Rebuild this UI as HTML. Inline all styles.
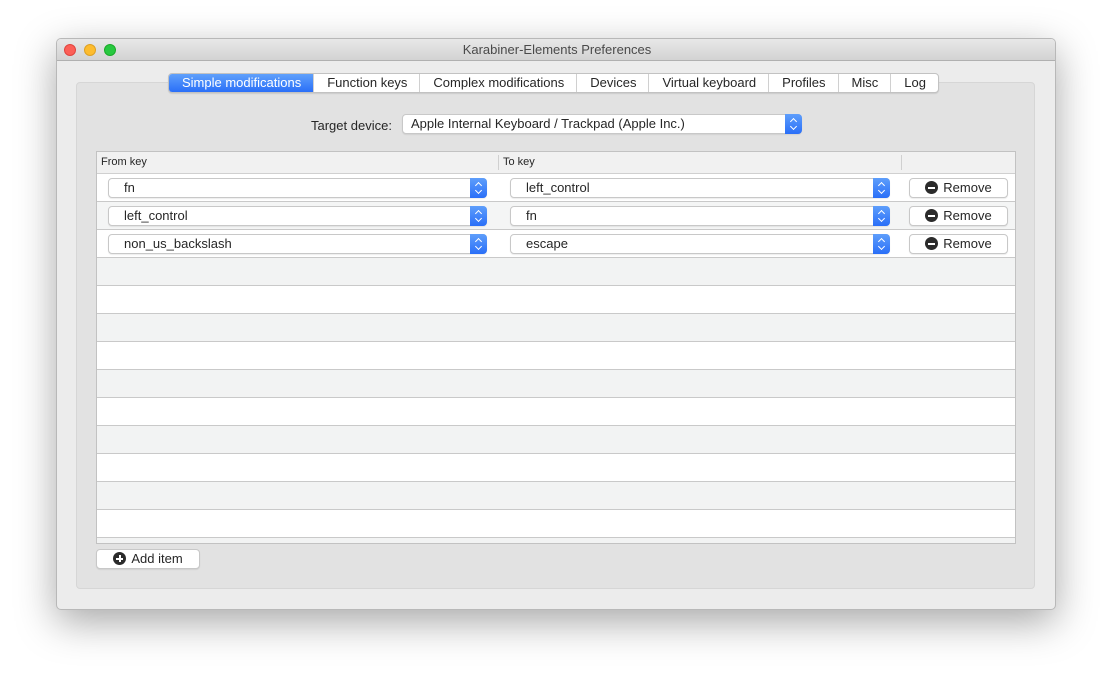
<!DOCTYPE html>
<html><head><style>
*{box-sizing:border-box;margin:0;padding:0}
body{width:1112px;height:684px;background:#fff;font-family:"Liberation Sans",sans-serif;font-size:13px;color:#262626;position:relative;overflow:hidden}
.a{position:absolute}
.win{left:56px;top:38px;width:1000px;height:572px;background:#ececec;border:1px solid #b8b8b8;border-radius:5px;box-shadow:0 12px 40px rgba(0,0,0,.35);overflow:hidden}
.tb{left:0;top:0;width:1000px;height:22px;background:linear-gradient(#e8e8e8,#d3d3d3);border-bottom:1px solid #b0b0b0;text-align:center;line-height:22px;color:#4a4a4a;font-size:13px}
.dot{top:5px;width:12px;height:12px;border-radius:50%}
.grp{left:19px;top:43px;width:959px;height:507px;background:#e2e2e2;border:1px solid #d6d6d6;border-radius:4px}
.tabs{left:111px;top:34px;height:20px;display:flex;background:#fff;border:1px solid #c2c2c2;border-radius:4px;overflow:hidden;box-shadow:0 1px 1px rgba(0,0,0,.1)}
.tabs div{padding:0 12px 0 13px;line-height:18px;border-right:1px solid #d0d0d0;font-size:13px}
.tabs div:last-child{border-right:none;padding-right:12px}
.tabs .on{background:linear-gradient(#5fa0fb,#2a6ff8);color:#fff}
.pop{height:20px;background:#fff;border:1px solid #c8c8c8;border-radius:4px;box-shadow:0 1px 1px rgba(0,0,0,.08);line-height:18px;padding-left:15px}
.arr{position:absolute;right:-1px;top:-1px;width:17px;height:20px;background:linear-gradient(#5e9efb,#2a6ff8);border-radius:0 4px 4px 0}
.arr:before,.arr:after{content:"";position:absolute;left:6px;width:4px;height:4px;border-left:1.3px solid #fff;border-top:1.3px solid #fff}
.arr:before{top:5px;transform:rotate(45deg)}
.arr:after{top:10px;transform:rotate(225deg)}
.btn{height:20px;background:#fff;border:1px solid #c8c8c8;border-radius:4px;box-shadow:0 1px 1px rgba(0,0,0,.08);line-height:18px;text-align:center}
.ic{display:inline-block;width:13px;height:13px;border-radius:50%;background:#2b2b2b;vertical-align:-2px;margin-right:5px;position:relative}
.ic:before{content:"";position:absolute;left:3px;top:5.5px;width:7px;height:2px;background:#fff}
.ic.p:after{content:"";position:absolute;left:5.5px;top:3px;width:2px;height:7px;background:#fff}
.row{left:0;width:918px;height:28px;border-bottom:1px solid #c9c9c9}
</style></head><body>
<div class="a win">
 <div class="a tb">Karabiner-Elements Preferences</div>
 <div class="a dot" style="left:7px;background:#fc5f57;border:1px solid #e0443e"></div>
 <div class="a dot" style="left:27px;background:#fdbc2e;border:1px solid #dea123"></div>
 <div class="a dot" style="left:47px;background:#28c840;border:1px solid #1aab29"></div>
 <div class="a grp"></div>
 <div class="a tabs"><div class="on">Simple modifications</div><div>Function keys</div><div>Complex modifications</div><div>Devices</div><div>Virtual keyboard</div><div>Profiles</div><div>Misc</div><div>Log</div></div>
 <div class="a" style="left:254px;top:79px;line-height:16px">Target device:</div>
 <div class="a pop" style="left:345px;top:75px;width:400px;padding-left:8px">Apple Internal Keyboard / Trackpad (Apple Inc.)<div class="arr"></div></div>
 <div class="a" style="left:39px;top:112px;width:920px;height:393px;background:#fff;border:1px solid #c2c2c2;overflow:hidden">
  <div class="a" style="left:0;top:0;width:918px;height:22px;background:#f1f1f1;border-bottom:1px solid #d0d0d0;font-size:11px;line-height:21px">
   <span class="a" style="left:4px">From key</span>
   <span class="a" style="left:401px;top:3px;height:15px;border-left:1px solid #d0d0d0"></span>
   <span class="a" style="left:406px">To key</span>
   <span class="a" style="left:804px;top:3px;height:15px;border-left:1px solid #d0d0d0"></span>
  </div>
  <div class="a row" style="top:22px;background:#fff"></div>
  <div class="a row" style="top:50px;background:#f4f5f5"></div>
  <div class="a row" style="top:78px;background:#fff"></div>
  <div class="a row" style="top:106px;background:#f2f3f3"></div>
  <div class="a row" style="top:134px;background:#fff"></div>
  <div class="a row" style="top:162px;background:#f2f3f3"></div>
  <div class="a row" style="top:190px;background:#fff"></div>
  <div class="a row" style="top:218px;background:#f2f3f3"></div>
  <div class="a row" style="top:246px;background:#fff"></div>
  <div class="a row" style="top:274px;background:#f2f3f3"></div>
  <div class="a row" style="top:302px;background:#fff"></div>
  <div class="a row" style="top:330px;background:#f2f3f3"></div>
  <div class="a row" style="top:358px;background:#fff"></div>
  <div class="a row" style="top:386px;background:#f2f3f3"></div>

  <div class="a pop" style="left:11px;top:26px;width:379px">fn<div class="arr"></div></div>
  <div class="a pop" style="left:413px;top:26px;width:380px">left_control<div class="arr"></div></div>
  <div class="a btn" style="left:812px;top:26px;width:99px"><span class="ic"></span>Remove</div>

  <div class="a pop" style="left:11px;top:54px;width:379px">left_control<div class="arr"></div></div>
  <div class="a pop" style="left:413px;top:54px;width:380px">fn<div class="arr"></div></div>
  <div class="a btn" style="left:812px;top:54px;width:99px"><span class="ic"></span>Remove</div>

  <div class="a pop" style="left:11px;top:82px;width:379px">non_us_backslash<div class="arr"></div></div>
  <div class="a pop" style="left:413px;top:82px;width:380px">escape<div class="arr"></div></div>
  <div class="a btn" style="left:812px;top:82px;width:99px"><span class="ic"></span>Remove</div>
 </div>
 <div class="a btn" style="left:39px;top:510px;width:104px"><span class="ic p"></span>Add item</div>
</div>
</body></html>
